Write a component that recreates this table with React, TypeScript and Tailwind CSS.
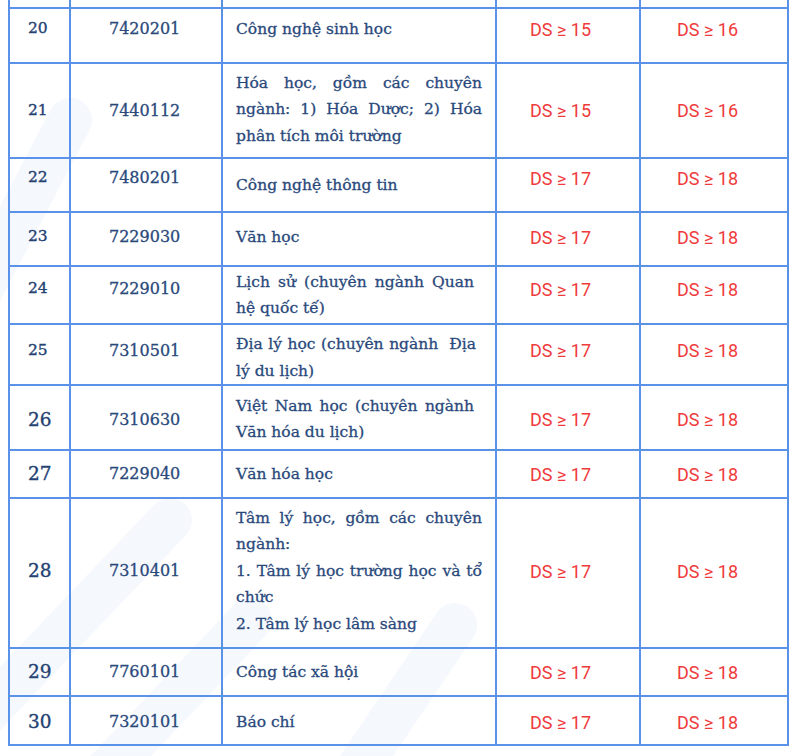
type Line = { t: string; j?: boolean; pr?: string };

type Row = {
  no: string;
  code: string;
  lines: Line[];
  a: string;
  b: string;
  h: string;
  numPad: string;
  textPad: string;
  big?: boolean;
};

const rows: Row[] = [
  { no: '20', code: '7420201', lines: [{ t: 'Công nghệ sinh học' }], a: '15', b: '16', h: 'h-[55px]', numPad: 'pb-[13px]', textPad: 'pb-[13px]' },
  {
    no: '21',
    code: '7440112',
    lines: [
      { t: 'Hóa học, gồm các chuyên', j: true },
      { t: 'ngành: 1) Hóa Dược; 2) Hóa', j: true },
      { t: 'phân tích môi trường' },
    ],
    a: '15',
    b: '16',
    h: 'h-[95px]',
    numPad: 'pb-0',
    textPad: 'pb-[2px]',
  },
  { no: '22', code: '7480201', lines: [{ t: 'Công nghệ thông tin' }], a: '17', b: '18', h: 'h-[54px]', numPad: 'pb-[14px]', textPad: 'pb-0' },
  { no: '23', code: '7229030', lines: [{ t: 'Văn học' }], a: '17', b: '18', h: 'h-[54px]', numPad: 'pb-[4px]', textPad: 'pb-[4px]' },
  {
    no: '24',
    code: '7229010',
    lines: [{ t: 'Lịch sử (chuyên ngành Quan', j: true, pr: 'pr-[8px]' }, { t: 'hệ quốc tế)' }],
    a: '17',
    b: '18',
    h: 'h-[58px]',
    numPad: 'pb-[12px]',
    textPad: 'pb-0',
  },
  {
    no: '25',
    code: '7310501',
    lines: [{ t: 'Địa lý học (chuyên ngành\u00a0 Địa', j: true, pr: 'pr-[6px]' }, { t: 'lý du lịch)' }],
    a: '17',
    b: '18',
    h: 'h-[60px]',
    numPad: 'pb-[8px]',
    textPad: 'pt-[6px]',
  },
  {
    no: '26',
    code: '7310630',
    lines: [{ t: 'Việt Nam học (chuyên ngành', j: true, pr: 'pr-[8px]' }, { t: 'Văn hóa du lịch)' }],
    a: '17',
    b: '18',
    h: 'h-[65px]',
    numPad: 'pt-[4px]',
    textPad: 'pt-[3px]',
    big: true,
  },
  { no: '27', code: '7229040', lines: [{ t: 'Văn hóa học' }], a: '17', b: '18', h: 'h-[48px]', numPad: 'pb-0', textPad: 'pb-0', big: true },
  {
    no: '28',
    code: '7310401',
    lines: [
      { t: 'Tâm lý học, gồm các chuyên', j: true },
      { t: 'ngành:' },
      { t: '1. Tâm lý học trường học và tổ', j: true },
      { t: 'chức' },
      { t: '2. Tâm lý học lâm sàng' },
    ],
    a: '17',
    b: '18',
    h: 'h-[150px]',
    numPad: 'pb-[4px]',
    textPad: 'pb-[4px]',
    big: true,
  },
  { no: '29', code: '7760101', lines: [{ t: 'Công tác xã hội' }], a: '17', b: '18', h: 'h-[48px]', numPad: 'pb-0', textPad: 'pb-0', big: true },
  { no: '30', code: '7320101', lines: [{ t: 'Báo chí' }], a: '17', b: '18', h: 'h-[49px]', numPad: 'pt-[3px]', textPad: 'pt-[3px]', big: true },
];

const cell = 'border-x-2 border-b-2 border-[#5a92ea] align-middle p-0';

// faint diagonal background bands
const Stripes = () => (
  <svg className="absolute inset-0 pointer-events-none" width="800" height="756" viewBox="0 0 800 756">
    <g stroke="#f5f8fd" strokeWidth="44" strokeLinecap="round" fill="none">
      <line x1="-40" y1="330" x2="70" y2="120" />
      <line x1="-30" y1="730" x2="170" y2="520" />
      <line x1="60" y1="820" x2="250" y2="620" />
      <line x1="330" y1="810" x2="455" y2="625" />
    </g>
  </svg>
);

const App = () => {
  return (
    <div className="relative w-[800px] h-[756px] overflow-hidden bg-white font-['DejaVu_Serif',serif] text-[#2a497b] [-webkit-text-stroke:0.3px_#2a497b]">
      <Stripes />
      <table className="relative ml-[8px] w-[779px] table-fixed border-collapse">
        <colgroup>
          <col className="w-[61px]" />
          <col className="w-[152px]" />
          <col className="w-[274px]" />
          <col className="w-[144px]" />
          <col className="w-[148px]" />
        </colgroup>
        <tbody>
          <tr className="h-[8px]">
            <td className={cell} />
            <td className={cell} />
            <td className={cell} />
            <td className={cell} />
            <td className={cell} />
          </tr>
          {rows.map((r) => (
            <tr key={r.no} className={r.h}>
              <td className={cell}>
                <div
                  className={`pl-[18px] text-[#244272] [-webkit-text-stroke:0.35px_#244272] ${r.numPad} ${
                    r.big ? 'text-[18.5px]' : 'text-[15.5px]'
                  }`}
                >
                  {r.no}
                </div>
              </td>
              <td className={cell}>
                <div className={`pl-[38px] text-[16px] ${r.numPad}`}>{r.code}</div>
              </td>
              <td className={cell}>
                <div className={`pl-[13px] pr-[13px] text-[15.5px] leading-[26.5px] ${r.textPad}`}>
                  {r.lines.map((l, i) => (
                    <div
                      key={i}
                      className={l.j ? `text-justify [text-align-last:justify] ${l.pr ?? ''}` : 'text-left'}
                    >
                      {l.t}
                    </div>
                  ))}
                </div>
              </td>
              <td className={cell}>
                <div
                  className={`pl-[33px] font-['Roboto',sans-serif] text-[18px] text-[#ef3b3b] [-webkit-text-stroke:0px] ${r.numPad}`}
                >
                  DS ≥ {r.a}
                </div>
              </td>
              <td className={cell}>
                <div
                  className={`pl-[36px] font-['Roboto',sans-serif] text-[18px] text-[#ef3b3b] [-webkit-text-stroke:0px] ${r.numPad}`}
                >
                  DS ≥ {r.b}
                </div>
              </td>
            </tr>
          ))}
        </tbody>
      </table>
    </div>
  );
};

export default App;
